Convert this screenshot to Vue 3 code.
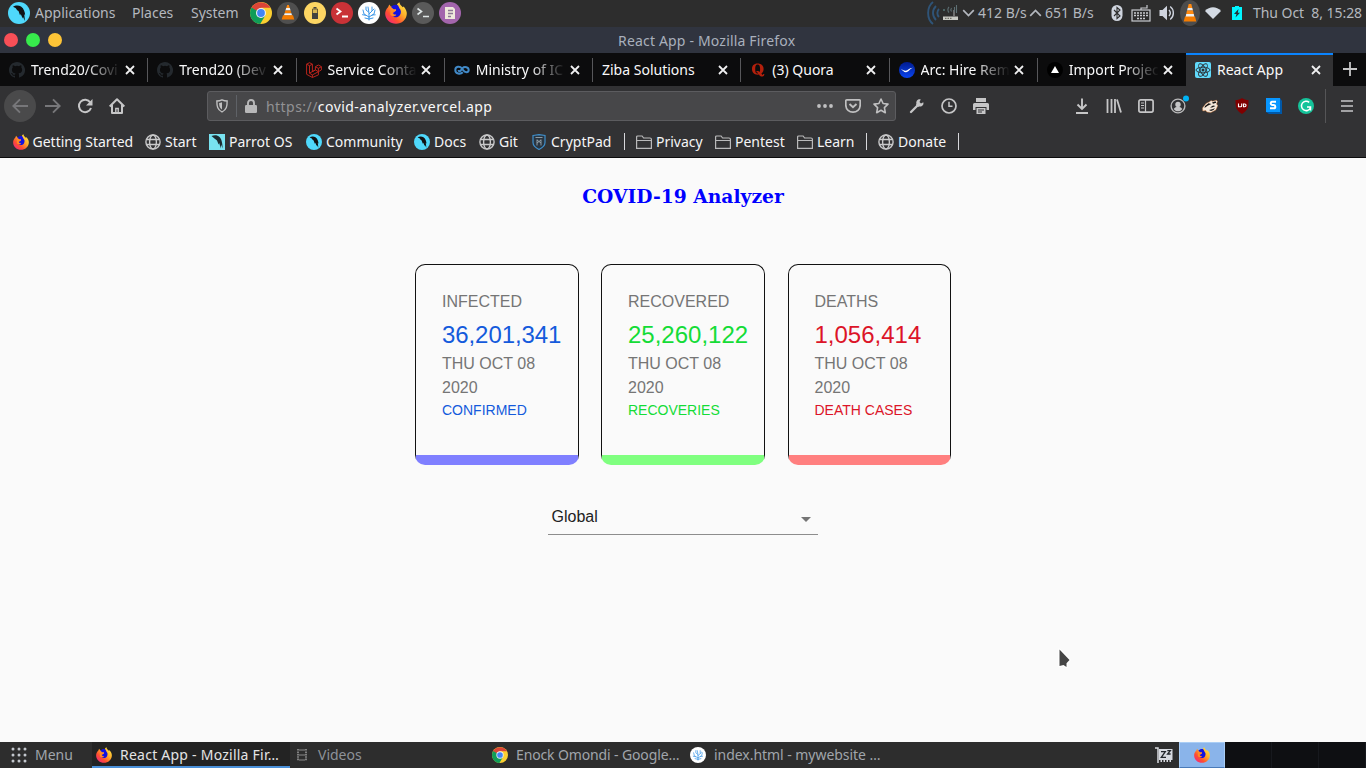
<script setup>
const launchers = ['chrome', 'vlc-round', 'power', 'root-term', 'coral', 'firefox', 'term', 'editor']
const tabs = [
  { icon: 'github', text: 'Trend20/Covi', fade: true },
  { icon: 'github', text: 'Trend20 (Dev', fade: true },
  { icon: 'laravel', text: 'Service Conta', fade: true },
  { icon: 'infinity', text: 'Ministry of IC', fade: true },
  { icon: '', text: 'Ziba Solutions' },
  { icon: 'quora', text: '(3) Quora' },
  { icon: 'arc', text: 'Arc: Hire Rem', fade: true },
  { icon: 'vercel', text: 'Import Projec', fade: true },
  { icon: 'react', text: 'React App', active: true },
]
const bookmarks = [
  { icon: 'firefox', text: 'Getting Started', width: 133 },
  { icon: 'globe', text: 'Start', width: 64 },
  { icon: 'parrot-square', text: 'Parrot OS', width: 97 },
  { icon: 'parrot', text: 'Community', width: 108 },
  { icon: 'parrot', text: 'Docs', width: 65 },
  { icon: 'globe', text: 'Git', width: 52 },
  { icon: 'cryptpad', text: 'CryptPad', width: 93 },
  { sep: true, width: 12 },
  { icon: 'folder', text: 'Privacy', width: 79 },
  { icon: 'folder', text: 'Pentest', width: 82 },
  { icon: 'folder', text: 'Learn', width: 69 },
  { sep: true, width: 12 },
  { icon: 'globe', text: 'Donate', width: 80 },
  { sep: true, width: 12 },
]
const extensions = ['download', 'library', 'sidebar', 'account', 'badger', 'ublock', 'sblue', 'grammarly']
const cards = [
  { kind: 'infected', title: 'INFECTED', value: '36,201,341', note: 'CONFIRMED' },
  { kind: 'recovered', title: 'RECOVERED', value: '25,260,122', note: 'RECOVERIES' },
  { kind: 'deaths', title: 'DEATHS', value: '1,056,414', note: 'DEATH CASES' },
]
</script>

<template>
  <div class="desktop">
    <svg class="sprite" width="0" height="0" aria-hidden="true">
      <defs>
        <linearGradient id="fxBody" x1="1" y1="0" x2="0.1" y2="1">
          <stop offset="0" stop-color="#fff44f" />
          <stop offset="0.4" stop-color="#ffb02a" />
          <stop offset="0.7" stop-color="#ff4f30" />
          <stop offset="1" stop-color="#f0208a" />
        </linearGradient>
        <linearGradient id="arcFill" x1="0" y1="0" x2="0" y2="1">
          <stop offset="0" stop-color="#001b8f" />
          <stop offset="1" stop-color="#0a45f0" />
        </linearGradient>
        <g id="cone">
          <path d="M10.2 3h1.6l1 3h-3.6z" fill="#ff8a10" />
          <path d="M9.2 6h3.6l.8 2.600H8.400z" fill="#f4f4f4" />
          <path d="M8.400 8.600h5.200l.8 2.600H7.600z" fill="#f57c00" />
          <path d="M7.600 11.200h6.800l.7 2.300H6.900z" fill="#f4f4f4" />
          <path d="M6 13.300h10l1.300 4.200H4.700z" fill="#f57c00" />
        </g>
      </defs>
      <symbol id="chrome" viewBox="0 0 22 22">
        <circle cx="11" cy="11" r="11" fill="#fbcf30" />
        <path d="M11 11L1.500 5.500A11 11 0 0 0 10.200 22L15.300 13.500z" fill="#0f9d58" />
        <path d="M1.500 5.500A11 11 0 0 1 20.500 5.800H11L5.500 9z" fill="#db4437" />
        <path d="M1.500 5.500L6 13.400l2-4z" fill="#0f9d58" />
        <circle cx="11" cy="11" r="5" fill="#f1f1f1" />
        <circle cx="11" cy="11" r="3.900" fill="#4285f4" />
      </symbol>
      <symbol id="vlc-round" viewBox="0 0 22 22">
        <circle cx="11" cy="11" r="11" fill="#4f4f4f" />
        <use href="#cone" />
      </symbol>
      <symbol id="power" viewBox="0 0 22 22">
        <circle cx="11" cy="11" r="11" fill="#fdd663" />
        <path d="M8.500 7h5v9.500h-5z" fill="#d8b652" stroke="#6a5c36" />
        <path d="M8 11h6v6H8zM9.500 5h3v1.500h-3z" fill="#42423f" />
      </symbol>
      <symbol id="root-term" viewBox="0 0 22 22">
        <circle cx="11" cy="11" r="11" fill="#c93237" />
        <path d="M5.500 6.500l4 3-4 3M11 14.500h6" fill="none" stroke="#fff" stroke-width="1.800" />
      </symbol>
      <symbol id="term" viewBox="0 0 22 22">
        <circle cx="11" cy="11" r="11" fill="#5a5a5a" />
        <path d="M5.500 6.500l4 3-4 3M11 14.500h6" fill="none" stroke="#dfe6e6" stroke-width="1.600" />
      </symbol>
      <symbol id="coral" viewBox="0 0 22 22">
        <circle cx="11" cy="11" r="11" fill="#fff" />
        <path d="M11 18v-7l-1-6M11 12l3-3 0-4M11 15l5-3 1-4M11 15l-5-3-1-4M10.500 10L8 8V5M14.200 13l3-.2M7.500 13.300l-3-.6M11 17l4-1M11 17l-4-1M14 9l2-2" fill="none" stroke="#3d98e8" stroke-width="1" stroke-linecap="round" />
      </symbol>
      <symbol id="firefox" viewBox="0 0 22 22">
        <path d="M3 5.200L4.300 2.500 6 4.800c1.800-1 4-1.400 6-.9-.3-1.500.8-2.800 2.400-3.700.2 2.500 1.800 3.200 3.300 5l1-.8C21 7.200 22 9.500 21.800 12c-.4 5.700-5 9.800-10.800 9.800S.4 17.500.2 12C.1 9.500 1 7 3 5.200z" fill="url(#fxBody)" />
        <path d="M6 5c2-2.200 5-2.800 7-1.700l1.500 3.200c1.500 1.500 2 4 .5 6.500-1.800 2.700-5.500 3-7.500 1 1.500.6 3-.1 3.800-1H9.200L8 11l3-2.200V7.300H8.600z" fill="#1212e0" />
        <path d="M5.500 7.500c1.500-.6 3.500 0 3.500.9C9 9.200 7.200 9 7.500 11c.3 1.400 2 2 3.800 1.300-1 2.200-4.300 2.800-6 .2z" fill="#ff8b24" />
      </symbol>
      <symbol id="editor" viewBox="0 0 22 22">
        <circle cx="11" cy="11" r="11" fill="#a365ad" />
        <path d="M6 5h8l2 2v10H6z" fill="#efe8dc" />
        <path d="M9 8.500h5M9 11.500h5M9 14.500h3" stroke="#8c7795" stroke-width="1.300" />
      </symbol>
      <symbol id="parrot" viewBox="0 0 22 22">
        <circle cx="11" cy="11" r="11" fill="#4fd8fb" />
        <path d="M5 4.800C7 3.300 10.500 3 13 4.500c3 2 4 6 4.200 9l-1-1.500.8 7-2-4-.3 1.500-2-4.500-.6 1.500L10.500 9C9 8.500 8.500 7 7.500 6z" fill="#101214" />
      </symbol>
      <symbol id="parrot-square" viewBox="0 0 16 16">
        <path d="M0 0h16v16H0z" fill="#78e2f0" />
        <path d="M2.500 2c3-1.200 6-1 8 1 2 2.300 2.800 4.500 3.200 11.500l-1.700-4-.2 4-1.600-5.500-.6 1.500L8 6.500C6.500 5 4.500 4 2.500 2z" fill="#1b2c31" />
      </symbol>
      <symbol id="github" viewBox="0 0 16 16">
        <path fill="#24292e" d="M8 0C3.580 0 0 3.580 0 8c0 3.540 2.290 6.530 5.470 7.590.4.070.55-.17.55-.38v-1.490c-2.010.37-2.530-.49-2.690-.94-.09-.23-.48-.94-.82-1.130-.28-.15-.68-.52-.01-.53.63-.01 1.080.58 1.230.82.72 1.210 1.870.87 2.330.66.07-.52.28-.87.51-1.070-1.780-.2-3.640-.89-3.640-3.950 0-.87.31-1.590.82-2.150-.08-.2-.36-1.020.08-2.120 0 0 .67-.21 2.200.82a7.400 7.400 0 0 1 4 0c1.530-1.040 2.200-.82 2.200-.82.44 1.100.16 1.920.08 2.120.51.56.82 1.270.82 2.150 0 3.070-1.870 3.750-3.650 3.950.29.25.54.73.54 1.480v2.200c0 .21.15.46.55.38A8 8 0 0 0 8 0z" />
      </symbol>
      <symbol id="laravel" viewBox="0 0 16 16">
        <path d="M.6 2.200l2.900-1.500 2.900 1.500v7.500l3-1.700V4.700l3-1.700 3 1.700v3.200l-3 1.800v3.200L6.400 15.500.6 12.300zM.6 2.200l2.900 1.500v7.500l2.900 1.700v2.600M3.500 3.700l2.900-1.500M3.500 11.200l5.900-3.300 3 1.800M6.400 12.900l6-3.200V6.400L9.400 4.700M12.400 6.400l3-1.700" fill="none" stroke="#b9241c" stroke-width="1" />
      </symbol>
      <symbol id="infinity" viewBox="0 0 16 16">
        <path d="M8.800 10.300C6.500 12.600 1.300 12 1.300 8S6 3.800 8 6.500l1 1.500c2 3 5.700 2.800 5.700 0S10.500 4.200 8.500 6.200L6.800 8.500C5.800 9.800 4.600 9.500 4.600 8" fill="none" stroke="#4189c7" stroke-width="2" />
      </symbol>
      <symbol id="quora" viewBox="0 0 16 16">
        <path fill="#b3200c" fill-rule="evenodd" d="M7.500 1.500C3.800 1.500 2 3.800 2 7s2 5.700 5.500 5.700l1.500-.2c.8 1.500 1.800 2.200 3.300 2 1.500-.1 2-1 2-2.400h-1c-.2 1.300-1.200 1-1.900-.5C12.600 10.800 13.600 9.200 13.600 7c0-3.400-2.400-5.500-6.100-5.500zm.1 1c1.600 0 2.500 1.400 2.500 4.500 0 1.600-.2 2.500-.4 3C8.900 9.100 8 8.800 6.400 9.300v.9c1 0 1.400.5 1.800 1.300C6 12 5.200 10.300 5.200 7c0-3 .6-4.500 2.400-4.500z" />
      </symbol>
      <symbol id="arc" viewBox="0 0 16 16">
        <circle cx="8" cy="8" r="8" fill="url(#arcFill)" />
        <path d="M2 7.500c2-.3 3 1.500 4.800 1.200C9 8.300 9.800 6 14 5.700c-3.300.9-4 4.300-7 4.500C4.700 10.400 4 8.200 2 7.500z" fill="#fff" />
      </symbol>
      <symbol id="vercel" viewBox="0 0 16 16">
        <circle cx="8" cy="8" r="8" fill="#000" />
        <path d="M8 4l4 7H4z" fill="#fff" />
      </symbol>
      <symbol id="react" viewBox="0 0 16 16">
        <rect width="16" height="16" rx="2" fill="#61dafb" />
        <g fill="none" stroke="#2b3036" stroke-width=".9">
          <ellipse cx="8" cy="8" rx="7" ry="2.800" />
          <ellipse cx="8" cy="8" rx="7" ry="2.800" transform="rotate(60 8 8)" />
          <ellipse cx="8" cy="8" rx="7" ry="2.800" transform="rotate(120 8 8)" />
        </g>
        <circle cx="8" cy="8" r="1.500" fill="#2b3036" />
      </symbol>
      <symbol id="globe" viewBox="0 0 16 16">
        <g fill="none" stroke="#c9c9ca" stroke-width="1.400">
          <circle cx="8" cy="8" r="7.100" /><ellipse cx="8" cy="8" rx="3.400" ry="7" /><path d="M1.500 5.500h13M1.500 10.500h13" />
        </g>
      </symbol>
      <symbol id="folder" viewBox="0 0 16 16">
        <path d="M.6 14.400V3c0-.6.4-1 1-1h4.500l1.500 2H14c.8 0 1.400.5 1.400 1.300v9.100zM.6 6.500h14.800" fill="none" stroke="#b9b9ba" stroke-width="1.200" />
      </symbol>
      <symbol id="cryptpad" viewBox="0 0 16 16">
        <path d="M2 1.500L8 .7l6 .8v7c0 3.500-3 5.500-6 7-3-1.500-6-3.500-6-7z" fill="#293541" stroke="#3f8fcb" stroke-width="1.200" />
        <path d="M4.500 3.500h7M6 5.500v6M10 5.500v6M6 6l4 3M10 6L6 9" fill="none" stroke="#9aa6ae" stroke-width=".9" />
      </symbol>
      <symbol id="wrench" viewBox="0 0 16 16">
        <path d="M2 14l7-7" stroke="#c6c6c7" stroke-width="2.300" stroke-linecap="round" />
        <path d="M14.300 4.300L12 5.400l-1.500-1.500L11.700 1.500C9 .8 6.800 3 7.400 5.800L7 7l2 2 1.200-.6c2.500.6 4.900-1.300 4.100-4.100z" fill="#c6c6c7" />
      </symbol>
      <symbol id="clock" viewBox="0 0 16 16">
        <circle cx="8" cy="8" r="7" fill="none" stroke="#c6c6c7" stroke-width="1.700" /><path d="M8 3.800V8.200h3.500" fill="none" stroke="#c6c6c7" stroke-width="1.500" />
      </symbol>
      <symbol id="printer" viewBox="0 0 16 16">
        <path fill="#c6c6c7" fill-rule="evenodd" d="M3 0h10v4H3zM1.500 5h13A1.500 1.500 0 0 1 16 6.500V12h-2.500V9h-11v3H0V6.500A1.500 1.500 0 0 1 1.500 5zM3.500 10h9v6h-9zM5 11.500v1h6v-1zm0 2v1h4v-1z" />
      </symbol>
      <symbol id="download" viewBox="0 0 16 16">
        <path d="M8 .5v10M3.500 6.500L8 11l4.500-4.500M2 15h12" fill="none" stroke="#c6c6c7" stroke-width="1.900" />
      </symbol>
      <symbol id="library" viewBox="0 0 16 16">
        <path d="M1.500 1v14M5.500 1v14M9 1v14M11 1.500l4 13" fill="none" stroke="#c6c6c7" stroke-width="1.800" />
      </symbol>
      <symbol id="sidebar" viewBox="0 0 16 16">
        <rect x=".9" y="1.900" width="14.200" height="12.200" rx="1.800" fill="none" stroke="#c6c6c7" stroke-width="1.700" />
        <path d="M7.500 2v12M3 5h3M3 7.500h3M3 10h3" fill="none" stroke="#c6c6c7" stroke-width="1.200" />
      </symbol>
      <symbol id="account" viewBox="0 0 20 20">
        <g transform="translate(1 3)">
          <circle cx="8" cy="8" r="6.900" fill="none" stroke="#b9b9ba" stroke-width="1.400" />
          <circle cx="8" cy="6.500" r="2.700" fill="#c6c6c7" /><path d="M3.700 11c1-1.800 2.500-2 4.300-2s3.300.2 4.300 2C11.200 12.600 9.800 13.300 8 13.300S4.800 12.600 3.700 11z" fill="#c6c6c7" />
        </g>
        <circle cx="17" cy="3.500" r="3" fill="#00b3f4" />
      </symbol>
      <symbol id="badger" viewBox="0 0 16 16">
        <path d="M.5 10L4 5.500l4-2 1-1 1.500.7 4-1 1 1.300L14.500 6l1.300 1.500-2 4.500-5 2.500-4-.5-1-1.500-3 .5z" fill="#f5e9dc" stroke="#d9742c" stroke-width=".4" />
        <path d="M3 8l3.500-2.800L9.500 6 6 7.500 2.500 10zM10 4.500l3.500-1.200.8 1.500-3.300 1zM8 9.500l3-2 2.500.5-3.500 1.500zM7 12l4-1 2-1-1.500 2L9 13z" fill="#171513" />
      </symbol>
      <symbol id="ublock" viewBox="0 0 16 16">
        <path d="M8 0c2 1.500 4 2 6.500 2 0 6.500 0 10-6.500 14C1.500 12 1.500 8.500 1.500 2 4 2 6 1.500 8 0z" fill="#800000" />
        <path d="M4.500 5.500V8.700h2.200a1 1 0 0 0 1-1V5.500M9.500 6h1.200a1.300 1.300 0 0 1 0 2.700H9.500z" fill="none" stroke="#fff" stroke-width="1.100" />
      </symbol>
      <symbol id="sblue" viewBox="0 0 16 16">
        <path d="M0 0h14l2 3v13H3l-3-2z" fill="#0058a8" /><path d="M0 0h14v14H0z" fill="#0796ff" />
        <path d="M10 3.800H6.200c-2 0-2 3 0 3.100h1.600c2 .2 2 3.300 0 3.300H4" fill="none" stroke="#fff" stroke-width="2" />
      </symbol>
      <symbol id="grammarly" viewBox="0 0 16 16">
        <circle cx="8" cy="8" r="8" fill="#15c39a" />
        <path d="M11.200 4.300A4.700 4.700 0 1 0 12.400 10M9 9h3.500v3.500" fill="none" stroke="#fff" stroke-width="1.500" />
      </symbol>
    </svg>

    <header class="panel">
      <svg class="ic22"><use href="#parrot" /></svg>
      <span class="m-apps">Applications</span>
      <span class="m-places">Places</span>
      <span class="m-system">System</span>
      <div class="launchers">
        <svg v-for="l in launchers" :key="l" class="ic22"><use :href="'#' + l" /></svg>
      </div>
      <div class="tray">
        <svg class="net" viewBox="0 0 32 24">
          <g fill="none" stroke="#2f5478" stroke-width="1.900"><path d="M6 1C-.5 6-.5 18 6 23M9 5c-4 4-4 10 0 14M12 8c-2.200 2.200-2.200 6 0 8" /></g>
          <path d="M16 15.500h15V19H16z" fill="#c8c9c3" /><path d="M18 17.300h7" stroke="#5a5a50" stroke-width="1" stroke-dasharray="1.500 1" />
          <path d="M27 9v6" stroke="#9a9a9a" stroke-width="1.200" /><path d="M22 6c-1.500 1.500-1.500 4 0 5.500M24.500 7c-.8 1-.8 2.500 0 3.500M27.500 6v5M29.500 4v8" fill="none" stroke="#5e7074" stroke-width="1.100" />
          <circle cx="17" cy="9" r="1" fill="#577" />
        </svg>
        <svg class="chev" viewBox="0 0 12 8"><path d="M.7 1.200L6 6.500l5.300-5.300" /></svg>
        <span class="rate">412 B/s</span>
        <svg class="chev" viewBox="0 0 12 8"><path d="M.7 6.800L6 1.500l5.300 5.300" /></svg>
        <span class="rate up">651 B/s</span>
        <svg class="bt" viewBox="0 0 12 16"><rect x=".5" width="11" height="16" rx="5.500" fill="#cfd4de" /><path d="M3 5l6 6-3 2.500v-11L9 5l-6 6" fill="none" stroke="#2d2d2d" stroke-width="1.100" /></svg>
        <svg class="kb" viewBox="0 0 20 18"><path d="M10 6V4h6V1" fill="none" stroke="#c9cbd0" stroke-width="1.200" /><rect x="1" y="6" width="18" height="11" fill="none" stroke="#c9cbd0" stroke-width="1.200" /><path d="M3 9h14M3 11.500h14M6 14.500h8" fill="none" stroke="#c9cbd0" stroke-width="1.400" stroke-dasharray="2 1" /></svg>
        <svg class="vol" viewBox="0 0 16 16"><path d="M.5 5h3L8 .8v14.400L3.500 11h-3z" fill="#cfd4de" /><path d="M10 5c1.600 1.800 1.600 4.200 0 6M11.200 1.500c4.200 3.300 4.200 9.700 0 13" fill="none" stroke="#cfd4de" stroke-width="1.400" /></svg>
        <svg class="vlc" viewBox="0 0 20 26"><ellipse cx="10" cy="13" rx="10" ry="13" fill="#4c4c4c" /><path d="M8.700 4h2.600l1 4H7.700z" fill="#ff8a10" /><path d="M7.700 8h4.600l.7 2.500H7z" fill="#eee" /><path d="M7 10.500h6l.8 3.500H6.200z" fill="#ff8a10" /><path d="M6.200 14h7.600l.6 3H5.600z" fill="#eee" /><path d="M5 16.500h10l1.300 5H3.700z" fill="#f57c00" /></svg>
        <svg class="wifi" viewBox="0 0 16 12"><path d="M0 4C4.500-1 11.500-1 16 4l-8 8z" fill="#d3dae3" /></svg>
        <svg class="bat" viewBox="0 0 10 14"><path d="M3 0h4v1h3v13H0V1h3z" fill="#00f5ff" /><path d="M6.500 3L2 8h2.500L3.500 11.500 8 6.800H5.800z" fill="#243038" /></svg>
        <span class="clock">Thu Oct &nbsp;8, 15:28</span>
      </div>
    </header>

    <div class="titlebar">
      <i class="dot red"></i><i class="dot green"></i><i class="dot amber"></i>
      <span>React App - Mozilla Firefox</span>
    </div>

    <nav class="tabs">
      <div v-for="(t, i) in tabs" :key="i" class="tab" :class="{ active: t.active }">
        <svg v-if="t.icon" class="ic16"><use :href="'#' + t.icon" /></svg>
        <span class="label" :class="{ fade: t.fade }">{{ t.text }}</span>
        <svg class="x" viewBox="0 0 10 10"><path d="M1 1l8 8M9 1L1 9" /></svg>
      </div>
      <svg class="plus" viewBox="0 0 14 14"><path d="M7 0v14M0 7h14" /></svg>
    </nav>

    <div class="toolbar">
      <div class="back"><svg class="ic16" viewBox="0 0 16 16"><path d="M16 8H1.500M8 1.300L1.300 8 8 14.700" fill="none" stroke="#77777a" stroke-width="1.900" /></svg></div>
      <svg class="ic16 fwd" viewBox="0 0 16 16"><path d="M0 8h14.500M8 1.300L14.700 8 8 14.700" fill="none" stroke="#77777a" stroke-width="1.900" /></svg>
      <svg class="ic16 reload" viewBox="0 0 16 16"><path d="M13.300 4.500A6.200 6.200 0 1 0 14 10" fill="none" stroke="#c6c6c7" stroke-width="2" /><path d="M15.500 1v6.500H9z" fill="#c6c6c7" /></svg>
      <svg class="ic16 home" viewBox="0 0 16 16"><path d="M.7 8.500L8 1.300l7.300 7.200M3 7v8h10V7" fill="none" stroke="#c6c6c7" stroke-width="2" stroke-linejoin="round" /><path d="M6.800 15v-4.500h2.400V15" fill="none" stroke="#c6c6c7" stroke-width="1.400" /></svg>
      <div class="urlbar">
        <svg class="shield" viewBox="0 0 14 16"><path d="M1 2.200c2.500-.1 4-.5 6-1.400 2 .9 3.500 1.300 6 1.400 0 6-.5 9.800-6 12.800-5.500-3-6-6.800-6-12.800z" fill="none" stroke="#c0c0c1" stroke-width="1.600" /><path d="M7 3.500v8.700c-2.800-2-3.300-4.200-3.400-7.800 1.400-.1 2.300-.4 3.400-.9z" fill="#c0c0c1" /></svg>
        <i class="bar"></i>
        <svg class="lock" viewBox="0 0 12 14"><rect y="6" width="12" height="8" rx="1.200" fill="#b8b8b9" /><path d="M3 7V4a3 3 0 0 1 6 0v3" fill="none" stroke="#b8b8b9" stroke-width="1.900" /></svg>
        <span class="url"><em>https://</em>covid-analyzer.vercel.app</span>
        <svg class="ic16 more" viewBox="0 0 16 16"><g fill="#c0c0c1"><circle cx="2" cy="8" r="1.900" /><circle cx="8" cy="8" r="1.900" /><circle cx="14" cy="8" r="1.900" /></g></svg>
        <svg class="ic16 pocket" viewBox="0 0 16 16"><path d="M1.800 1.800h12.400q1 0 1 1V7c0 9.500-14.400 9.500-14.400 0V2.800q0-1 1-1z" fill="none" stroke="#c0c0c1" stroke-width="1.700" /><path d="M4.500 6L8 9.300 11.500 6" fill="none" stroke="#c0c0c1" stroke-width="1.900" /></svg>
        <svg class="ic16 star" viewBox="0 0 16 16"><path d="M8 1l2.100 4.500 4.900.6-3.600 3.500.9 5.100L8 12.300l-4.300 2.400.9-5.100L1 6.100l4.900-.6z" fill="none" stroke="#c0c0c1" stroke-width="1.600" stroke-linejoin="round" /></svg>
      </div>
      <div class="tools">
        <svg class="ic16"><use href="#wrench" /></svg>
        <svg class="ic16"><use href="#clock" /></svg>
        <svg class="ic16"><use href="#printer" /></svg>
      </div>
      <div class="exts">
        <svg v-for="e in extensions" :key="e" :class="e === 'account' ? 'ic20' : 'ic16'"><use :href="'#' + e" /></svg>
      </div>
      <i class="vline"></i>
      <svg class="burger" viewBox="0 0 12 12"><path d="M0 1h12M0 6h12M0 11h12" stroke="#c6c6c7" stroke-width="1.700" /></svg>
    </div>

    <div class="bookmarks">
      <div v-for="(b, i) in bookmarks" :key="i" class="bm" :style="{ width: b.width + 'px' }">
        <i v-if="b.sep"></i>
        <template v-else>
          <svg class="ic16"><use :href="'#' + b.icon" /></svg>
          <span>{{ b.text }}</span>
        </template>
      </div>
    </div>

    <main class="page">
      <h3>COVID-19 Analyzer</h3>
      <section class="cards">
        <article v-for="c in cards" :key="c.kind" class="card" :class="c.kind">
          <p class="title">{{ c.title }}</p>
          <p class="value">{{ c.value }}</p>
          <p class="date">THU OCT 08<br />2020</p>
          <p class="note">{{ c.note }}</p>
        </article>
      </section>
      <div class="select"><span>Global</span><i></i></div>
      <svg class="cursor" viewBox="0 0 14 22"><path d="M1.500 1.500l10 10.500-3 3.200V19L5.500 17l-4 1z" fill="#454545" stroke="#fff" stroke-width="2.400" stroke-linejoin="round" paint-order="stroke" /></svg>
    </main>

    <footer class="taskbar">
      <div class="menu">
        <svg class="grid" viewBox="0 0 16 16"><g fill="#c3c7cd"><circle v-for="n in 9" :key="n" :cx="2 + ((n - 1) % 3) * 6" :cy="2 + Math.floor((n - 1) / 3) * 6" r="1.500" /></g></svg>
        <span>Menu</span>
      </div>
      <div class="task current"><svg class="ic16"><use href="#firefox" /></svg><span>React App - Mozilla Fir…</span></div>
      <div class="task videos"><svg class="film" viewBox="0 0 10 12"><path d="M1 0v12M9 0v12" stroke="#8b8b8b" stroke-width="1.800" stroke-dasharray="1.600 .8" /><path d="M2 1h6M2 6h6M2 11h6" stroke="#8b8b8b" /></svg><span>Videos</span></div>
      <div class="task google"><svg class="ic16"><use href="#chrome" /></svg><span>Enock Omondi - Google…</span></div>
      <div class="task site"><svg class="ic16"><use href="#coral" /></svg><span>index.html - mywebsite …</span></div>
      <svg class="zz" viewBox="0 0 18 16"><path d="M0 1h3v15" fill="none" stroke="#d7dae0" stroke-width="1.500" /><path d="M4 2h13.500v11H16v2h-1.500v-2H13v2h-1.500v-2H10v2H8.500v-2H7v2H5.500v-2H4z" fill="#d7dae0" /><path d="M6 4.700h4.300L6.300 10.300H11M12.300 3.700h3L12.600 7h3" fill="none" stroke="#22262b" stroke-width="1.300" /></svg>
      <div class="spaces">
        <div class="space on"><svg class="ic16"><use href="#firefox" /></svg></div>
        <div class="space"></div><div class="space"></div><div class="space"></div>
      </div>
    </footer>
  </div>
</template>

<style>
body { margin: 0; overflow: hidden; }
</style>

<style scoped>
.desktop { width: 1366px; height: 768px; display: flex; flex-direction: column; overflow: hidden; font: 14px/20px "Noto Sans", sans-serif; background: #fafafa; }
.desktop * { box-sizing: border-box; }
svg { flex: none; display: block; }
span { white-space: nowrap; }
.sprite { position: absolute; }
.ic16 { width: 16px; height: 16px; }
.ic20 { width: 20px; height: 20px; }
.ic22 { width: 22px; height: 22px; }

.panel { height: 27px; flex: none; background: #2d2d2d; color: #b4b8bf; display: flex; align-items: center; padding: 0 0 1px 8px; }
.m-apps { margin-left: 5px; width: 97px; }
.m-places { width: 59px; }
.m-system { width: 59px; }
.launchers { display: flex; gap: 5px; }
.tray { margin-left: auto; display: flex; align-items: center; height: 26px; }
.net { width: 32px; height: 24px; margin-right: 3px; }
.chev { width: 13px; height: 8px; margin-right: 3px; }
.chev path { fill: none; stroke: #b4b8bf; stroke-width: 1.700; }
.rate { width: 51px; }
.rate.up { width: 66px; }
.bt { width: 12px; height: 16px; }
.kb { width: 20px; height: 18px; margin-left: 8px; }
.vol { width: 16px; height: 16px; margin-left: 8px; }
.vlc { width: 20px; height: 26px; margin-left: 5px; }
.wifi { width: 16px; height: 12px; margin-left: 5px; }
.bat { width: 10px; height: 14px; margin-left: 11px; }
.clock { width: 113px; margin-left: 11px; letter-spacing: -.05px; }

.titlebar { height: 26px; flex: none; background: #30343f; color: #a9b0bc; display: flex; align-items: center; padding-left: 4px; gap: 8px; }
.dot { width: 14px; height: 14px; border-radius: 50%; }
.red { background: #f84f57; }
.green { background: #37ea4c; }
.amber { background: #fdc437; }
.titlebar span { margin: 2px 0 0 548px; letter-spacing: .18px; }

.tabs { height: 33px; flex: none; background: #0c0c0d; color: #f9f9fa; display: grid; grid-template-columns: repeat(8, 148.250px) 147px 33px; }
.tab { display: flex; align-items: center; padding: 0 13.500px 0 9px; position: relative; }
.tab:not(.active)::after { content: ""; position: absolute; right: 0; top: 5px; height: 24px; width: 1px; background: #57575a; }
.tab:nth-child(8)::after { display: none; }
.tab.active { background: #323234; border-top: 2px solid #0a84ff; padding: 0 12px 2px 9px; }
.label { flex: 1; margin: 0 4px 0 6px; min-width: 0; }
.label:first-child { margin-left: 0; }
.fade { -webkit-mask-image: linear-gradient(to left, transparent 0, #000 36px); mask-image: linear-gradient(to left, transparent 0, #000 36px); }
.x { width: 10px; height: 10px; }
.x path { stroke: #f0f0f1; stroke-width: 1.800; }
.plus { width: 14px; height: 14px; margin: 9px 0 0 10px; }
.plus path { stroke: #c6c6c7; stroke-width: 1.800; }

.toolbar { height: 40px; flex: none; background: #323234; display: flex; align-items: center; padding-left: 4px; }
.back { width: 32px; height: 32px; border-radius: 50%; background: #4a4a4b; display: grid; place-items: center; }
.fwd { margin-left: 9px; }
.reload { margin-left: 16px; }
.home { margin-left: 16px; }
.urlbar { margin-left: 82px; width: 689px; height: 30px; border: 1px solid #5c5c5f; border-radius: 3px; background: #474749; display: flex; align-items: center; color: #f9f9fa; padding-left: 8px; }
.shield { width: 12px; height: 14px; }
.bar { width: 1px; height: 22px; margin: 0 8px 0 8px; background: #5f6267; }
.lock { width: 12px; height: 14px; }
.url { flex: 1; margin-left: 9px; padding-top: 2px; letter-spacing: .45px; }
.url em { font-style: normal; color: #929294; }
.more { margin-right: 12px; }
.pocket { margin-right: 12px; }
.star { margin-right: 6px; }
.tools { display: flex; gap: 16px; margin-left: 13px; }
.exts { display: flex; gap: 16px; margin-left: 85px; align-items: center; }
.exts .ic20 { margin: -3px -3px 0 -1px; }
.vline { width: 1px; height: 34px; background: #555557; margin-left: 11px; }
.burger { width: 12px; height: 12px; margin-left: 15px; }

.bookmarks { height: 32px; flex: none; background: #323234; border-bottom: 1px solid #0c0c0d; color: #f5f5f6; display: flex; padding-left: 12px; }
.bm { display: flex; align-items: center; flex: none; gap: 4px; }
.bm:first-child { padding-left: .5px; }
.bm i { width: 1px; height: 17px; background: #d7d7db; }

.page { flex: 1; background: #fafafa; position: relative; display: flex; flex-direction: column; align-items: center; }
h3 { font: bold 18.720px/22px "DejaVu Serif", serif; color: #00f; margin: 27px 0 0; height: 79px; }
.cards { display: flex; gap: 22px; }
.card { width: 164px; height: 201px; border: 1px solid #111; border-bottom: 10px solid; border-radius: 10px; padding: 25px 0 0 26px; font-family: "Liberation Sans", Arial, sans-serif; }
.card p { margin: 0; white-space: nowrap; }
.title, .date { font-size: 16px; line-height: 24px; color: #757575; }
.card .title { margin-bottom: 5px; }
.value { font-size: 24px; line-height: 32px; }
.card .date { padding-top: 1px; }
.note { font-size: 14px; line-height: 20px; }
.infected { border-bottom-color: #7f7fff; }
.infected .value, .infected .note { color: #145adc; }
.infected .value { letter-spacing: -.08px; }
.recovered { border-bottom-color: #7fff7f; }
.recovered .value, .recovered .note { color: #14dc37; }
.deaths { border-bottom-color: #ff7f7f; width: 163px; margin-left: 1px; padding-left: 25.500px; }
.deaths .value, .deaths .note { color: #dc1428; }
.select { width: 270px; height: 33px; margin-top: 37px; border-bottom: 1px solid #8d8d8d; display: flex; justify-content: space-between; padding: 3px 7px 0 3.500px; font: 16px/24px "Liberation Sans", Arial, sans-serif; color: #222; }
.select i { width: 0; height: 0; margin-top: 12px; border: 5px solid transparent; border-top-color: #757575; border-bottom: 0; }
.cursor { position: absolute; left: 1058px; top: 490px; width: 14px; height: 22px; }

.taskbar { height: 26px; flex: none; background: #2d2d2d; color: #a0a5ab; display: flex; align-items: center; }
.menu { width: 92px; height: 26px; display: flex; align-items: center; padding-left: 11px; gap: 8px; }
.grid { width: 16px; height: 16px; }
.task { height: 26px; display: flex; align-items: center; gap: 8px; flex: none; }
.current { width: 198px; background: #232323; color: #e4e4e5; border-bottom: 2px solid #4a90d9; padding: 2px 0 0 4px; letter-spacing: .24px; }
.videos { width: 202px; padding-left: 7px; gap: 11px; color: #8d9299; }
.film { width: 10px; height: 12px; }
.google { width: 198px; letter-spacing: -.13px; }
.site { width: 465px; letter-spacing: -.04px; }
.zz { width: 18px; height: 16px; }
.spaces { display: grid; grid-template-columns: 46px 47px 47px 47px; margin-left: auto; height: 26px; background: #0e0f12; }
.space { border-right: 1px solid #17191e; }
.on { background: #8ab4ea; border: 1px solid #a9cdf5; border-bottom-color: #4a7ab8; display: grid; place-items: center; }
</style>
